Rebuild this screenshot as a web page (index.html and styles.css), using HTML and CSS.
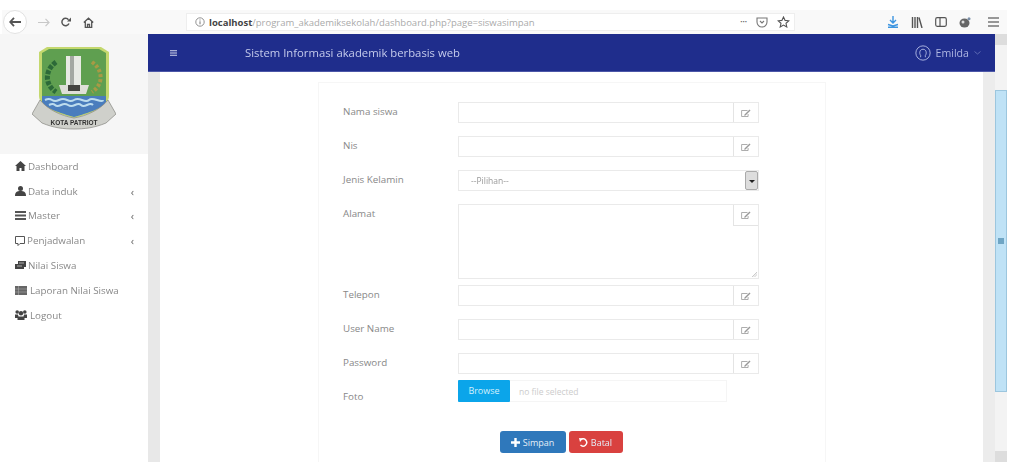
FILE: index.html
```html
<!DOCTYPE html>
<html lang="id">
<head>
    <meta charset="UTF-8">
    <title>Sistem Informasi Akademik</title>
    <link rel="stylesheet" href="styles.css">
</head>
<body>
<div class="page">
    <div class="toolbar">
        <div class="nav-icons">
            <span class="back-btn">
                <svg width="12" height="10" viewBox="0 0 12 10"><path d="M5 .8L1.200 5 5 9.200M1.800 5H12" fill="none" stroke="#555" stroke-width="1.800"/></svg>
            </span>
            <svg class="fwd" width="12" height="9" viewBox="0 0 12 9"><path d="M7.500.8l3.500 3.700-3.500 3.700M0 4.500h10" fill="none" stroke="#c8c8c8" stroke-width="1.200"/></svg>
            <svg class="reload" width="11" height="10" viewBox="0 0 11 10"><path d="M9 6.500A3.700 3.700 0 1 1 8.500 2.700" fill="none" stroke="#555" stroke-width="1.500"/><path d="M11 .5v4H7z" fill="#555"/></svg>
            <svg class="home" width="11" height="11" viewBox="0 0 11 11"><path d="M.8 5.500L5.500 1.200l4.700 4.300M2.300 4.700v5.600h6.400V4.700M4.500 10.300V7.500h2v2.800" fill="none" stroke="#555" stroke-width="1.300"/></svg>
        </div>
        <div class="urlbar">
            <svg class="info" width="10" height="10" viewBox="0 0 10 10"><circle cx="5" cy="5" r="4.200" fill="none" stroke="#777" stroke-width=".8"/><path d="M5 4.300v3M5 2.500v1" stroke="#777"/></svg>
            <span class="url"><b>localhost</b>/program_akademiksekolah/dashboard.php?page=siswasimpan</span>
            <span class="url-actions">
                <span class="dots">•••</span>
                <svg width="12" height="11" viewBox="0 0 12 11"><path d="M1 1h10v4a5 5 0 0 1-10 0zM4 4l2 2 2-2" fill="none" stroke="#777" stroke-width="1.100"/></svg>
                <svg width="13" height="12" viewBox="0 0 13 12"><path d="M6.500 1l1.600 3.400 3.700.4-2.800 2.500.8 3.700-3.300-1.900-3.300 1.900.8-3.700L1.200 4.800l3.700-.4z" fill="none" stroke="#555" stroke-width="1.100"/></svg>
            </span>
        </div>
        <div class="tool-icons">
            <svg width="12" height="12" viewBox="0 0 12 12"><path d="M6 0v7M3 4l3 3 3-3M1 8.500l5 1.500 5-1.500M1 11.300h10" fill="none" stroke="#3d95e0" stroke-width="1.400"/></svg>
            <svg width="12" height="11" viewBox="0 0 12 11"><path d="M1.500 0v11M4 0v11M6.500 0v11M8 .5l3 10.500" fill="none" stroke="#555" stroke-width="1.400"/></svg>
            <svg width="12" height="10" viewBox="0 0 12 10"><rect x=".7" y=".7" width="10.600" height="8.600" rx="1.500" fill="none" stroke="#555" stroke-width="1.200"/><path d="M5 1v8" stroke="#555" stroke-width="1.200"/></svg>
            <svg width="12" height="11" viewBox="0 0 12 11"><ellipse cx="5.500" cy="6" rx="5" ry="4.500" fill="#666"/><circle cx="4" cy="5" r="1.500" fill="#ddd"/><circle cx="10" cy="1.800" r="1.500" fill="#7a8fa8"/></svg>
            <svg class="burger" width="11" height="10" viewBox="0 0 11 10"><path d="M0 1h11M0 5h11M0 9h11" stroke="#777" stroke-width="1.300"/></svg>
        </div>
    </div>

    <div class="frame">
        <aside class="sidebar">
            <div class="logo-box">
                <svg width="84" height="84" viewBox="0 0 84 84">
                    <path d="M7 6L15 1H69L77 6V50C77 60 60 68 42 72C24 68 7 60 7 50Z" fill="#c4d86e"/>
                    <path d="M10 7L17 3H67L74 7V50H10Z" fill="#5f9f50"/>
                    <path d="M24 16C13 24 12 38 24 46" fill="none" stroke="#2c6a38" stroke-width="5" stroke-dasharray="4 1.500"/>
                    <path d="M60 16C71 24 72 38 60 46" fill="none" stroke="#a89a45" stroke-width="4" stroke-dasharray="3 2"/>
                    <path d="M34 10H49V40H34Z" fill="#e8eae4"/>
                    <path d="M38 10H42V40H38Z" fill="#a4a8a2"/>
                    <path d="M27 39H57L54 48H30Z" fill="#dedfd8"/>
                    <path d="M36 39H48V45H36Z" fill="#44443f"/>
                    <path d="M10 50H74V56C72 62 56 67 42 71C28 67 12 62 10 56Z" fill="#4a7dbd"/>
                    <path d="M13 54q4-2 7 0t7 0 8 0 7 0 8 0 7 0 8 0 6 0M17 59q4-2 6 0t6 0 7 0 7 0 6 0 6 0 6 0" fill="none" stroke="#bcdcee" stroke-width="2"/>
                    <path d="M0 68L8 54C16 64 30 70 42 72C54 70 68 64 76 54L84 68L74 77C62 82 52 83 42 83C32 83 22 82 10 77Z" fill="#cfd0cb" stroke="#85857f" stroke-width=".7"/>
                    <text class="crest-text" x="42" y="79" text-anchor="middle">KOTA PATRIOT</text>
                </svg>
            </div>
            <ul class="menu">
                <li><svg class="mi" width="11" height="10" viewBox="0 0 11 10"><path d="M5.500 0L11 5H9.500V10H6.500V7H4.500V10H1.500V5H0Z" fill="#444"/></svg>Dashboard</li>
                <li><svg class="mi" width="11" height="10" viewBox="0 0 11 10"><circle cx="5.500" cy="2.500" r="2.500" fill="#444"/><path d="M0 10C0 6 2 5 5.500 5S11 6 11 10Z" fill="#444"/></svg>Data induk<span class="caret">‹</span></li>
                <li><svg class="mi" width="11" height="9" viewBox="0 0 11 9"><path d="M0 0h11v2H0zM0 3.500h11v2H0zM0 7h11v2H0z" fill="#555"/></svg>Master<span class="caret">‹</span></li>
                <li><svg class="mi" width="10" height="10" viewBox="0 0 10 10"><path d="M.5.500h9v7H5L3 9.500V7.500H.5z" fill="none" stroke="#555"/></svg>Penjadwalan<span class="caret">‹</span></li>
                <li><svg class="mi" width="11" height="9" viewBox="0 0 11 9"><path d="M3 0h8v6H9v2H0V3h3z" fill="#444"/><path d="M4 2h5M2 5h5" stroke="#ddd" stroke-width=".7"/></svg>Nilai Siswa</li>
                <li class="wide"><svg class="mi" width="12" height="9" viewBox="0 0 12 9"><path d="M0 0h12v9H0z" fill="#666"/><path d="M0 3h12M0 6h12M3.500 0v9" stroke="#aaa" stroke-width=".6"/></svg>Laporan Nilai Siswa</li>
                <li class="wide"><svg class="mi" width="12" height="10" viewBox="0 0 12 10"><circle cx="2.200" cy="2" r="1.800" fill="#444"/><circle cx="9.800" cy="2" r="1.800" fill="#444"/><circle cx="6" cy="3.200" r="2.200" fill="#444"/><path d="M0 4.500h3l.5 2h5l.5-2h3V8H9.500V10h-7V8H0Z" fill="#444"/></svg>Logout</li>
            </ul>
        </aside>

        <div class="main">
            <header class="topbar">
                <svg class="hamb" width="7" height="6" viewBox="0 0 7 6"><path d="M0 .7h7M0 3h7M0 5.300h7" stroke="#d5d8ec" stroke-width="1.100"/></svg>
                <span class="app-title">Sistem Informasi akademik berbasis web</span>
                <span class="user">
                    <svg width="16" height="16" viewBox="0 0 17 17"><circle cx="8.500" cy="8.500" r="7.600" fill="none" stroke="#aeb6e2"/><path d="M6 13V11C4.500 9.500 4.500 4.500 8.500 4.500S12.500 9.500 11 11V13" fill="none" stroke="#aeb6e2"/></svg>
                    Emilda
                    <svg class="chev" width="7" height="4" viewBox="0 0 7 4"><path d="M.5.500l3 2.500 3-2.500" fill="none" stroke="#6f79bd" stroke-width=".8"/></svg>
                </span>
            </header>
            <div class="content">
                <form class="card">
                    <div class="row">
                        <label>Nama siswa</label>
                        <div class="group">
                            <input type="text">
                            <span class="addon"><svg class="edit" width="10" height="8" viewBox="0 0 10 8"><use href="#pencil"/></svg></span>
                        </div>
                    </div>
                    <div class="row">
                        <label>Nis</label>
                        <div class="group">
                            <input type="text">
                            <span class="addon"><svg class="edit" width="10" height="8" viewBox="0 0 10 8"><use href="#pencil"/></svg></span>
                        </div>
                    </div>
                    <div class="row">
                        <label>Jenis Kelamin</label>
                        <div class="group select">
                            <span class="select-text">--Pilihan--</span>
                            <span class="select-arrow"></span>
                        </div>
                    </div>
                    <div class="row row-area">
                        <label>Alamat</label>
                        <div class="group area">
                            <span class="addon"><svg class="edit" width="10" height="8" viewBox="0 0 10 8"><use href="#pencil"/></svg></span>
                        </div>
                    </div>
                    <div class="row">
                        <label>Telepon</label>
                        <div class="group">
                            <input type="text">
                            <span class="addon"><svg class="edit" width="10" height="8" viewBox="0 0 10 8"><use href="#pencil"/></svg></span>
                        </div>
                    </div>
                    <div class="row">
                        <label>User Name</label>
                        <div class="group">
                            <input type="text">
                            <span class="addon"><svg class="edit" width="10" height="8" viewBox="0 0 10 8"><use href="#pencil"/></svg></span>
                        </div>
                    </div>
                    <div class="row">
                        <label>Password</label>
                        <div class="group">
                            <input type="text">
                            <span class="addon"><svg class="edit" width="10" height="8" viewBox="0 0 10 8"><use href="#pencil"/></svg></span>
                        </div>
                    </div>
                    <div class="row row-file">
                        <label>Foto</label>
                        <div class="file-group">
                            <span class="browse">Browse</span>
                            <span class="file-name">no file selected</span>
                        </div>
                    </div>
                    <div class="actions">
                        <span class="btn btn-blue"><svg width="9" height="9" viewBox="0 0 9 9"><path d="M4.500 0v9M0 4.500h9" stroke="#fff" stroke-width="2.400"/></svg>Simpan</span>
                        <span class="btn btn-red"><svg width="9" height="9" viewBox="0 0 9 9"><path d="M2 1.500A3.600 3.600 0 1 1 1.500 7" fill="none" stroke="#fff" stroke-width="1.400"/><path d="M0 0l4 .5L1 4z" fill="#fff"/></svg>Batal</span>
                    </div>
                </form>
            </div>
        </div>

        <div class="scrollbar">
            <span class="sb-btn"></span>
            <div class="sb-track"><div class="sb-thumb"><span class="grip"></span></div></div>
            <span class="sb-btn"></span>
        </div>
    </div>
</div>

<svg class="defs" width="0" height="0">
    <symbol id="pencil" viewBox="0 0 10 8"><path d="M6.500 1.500H.6v6h6.500V5" fill="none" stroke="#999" stroke-width=".8"/><path d="M3.500 5.500L8.500.5l1 1-5 5-1.300.2z" fill="#999"/></symbol>
</svg>
</body>
</html>
```
FILE: styles.css
```css
* {
    box-sizing: border-box;
}
html, body {
    margin: 0;
    height: 100%;
    background: #fff;
    overflow: hidden;
}
body {
    font-family: "Open Sans", "Liberation Sans", sans-serif;
    color: #777;
    font-size: 9.8px;
}
.page {
    height: 468px;
    padding-top: 10px;
    filter: blur(0.7px);
}
.defs {
    position: absolute;
}

/* browser bar */
.toolbar {
    display: flex;
    align-items: center;
    width: 1005px;
    height: 24px;
    margin-left: 2px;
    background: #f9f9f9;
}
.nav-icons {
    display: flex;
    align-items: center;
    width: 184px;
}
.back-btn {
    display: flex;
    align-items: center;
    justify-content: center;
    width: 24px;
    height: 24px;
    margin-left: 1px;
    border: 1px solid #e2e2e2;
    border-radius: 50%;
    background: #fff;
}
.fwd {
    margin-left: 11px;
}
.reload {
    margin-left: 10px;
}
.home {
    margin-left: 12px;
}
.urlbar {
    display: flex;
    align-items: center;
    width: 609px;
    height: 18px;
    padding: 0 4px 0 8px;
    background: #fff;
    border: 1px solid #eee;
}
.url {
    margin-left: 4px;
    font-size: 9.5px;
    color: #aaa;
}
.url b {
    color: #444;
}
.url-actions {
    display: flex;
    align-items: center;
    gap: 9px;
    margin-left: auto;
}
.dots {
    font-size: 6px;
    color: #666;
}
.tool-icons {
    display: flex;
    align-items: center;
    gap: 12px;
    margin-left: 92px;
}
.burger {
    margin-left: 5px;
}

/* page frame */
.frame {
    display: flex;
    height: 428px;
}
.sidebar {
    width: 148px;
    flex: none;
}
.logo-box {
    display: flex;
    justify-content: center;
    height: 120px;
    padding-top: 12px;
    background: #f6f6f6;
}
.crest-text {
    font-family: "Liberation Sans", sans-serif;
    font-size: 6.5px;
    font-weight: bold;
    fill: #333;
}
.menu {
    list-style: none;
    margin: 0;
    padding: 0 0 0 15px;
}
.menu li {
    display: flex;
    align-items: center;
    height: 24.8px;
    padding-right: 14px;
    font-size: 9.8px;
    color: #888;
}
.mi {
    margin-right: 2px;
    flex: none;
}
.menu .wide .mi {
    margin-right: 3px;
}
.caret {
    margin-left: auto;
    font-size: 11px;
    color: #666;
}

.main {
    width: 847px;
    flex: none;
    display: flex;
    flex-direction: column;
}
.topbar {
    display: flex;
    align-items: center;
    height: 38px;
    padding: 0 14px 0 22px;
    background: #1f2d8c;
    color: #c5cbec;
    border-bottom: 1px solid #4c57a8;
}
.app-title {
    margin-left: 68px;
    font-size: 11.3px;
}
.user {
    display: flex;
    align-items: center;
    gap: 5px;
    margin-left: auto;
    font-size: 10.6px;
    color: #aeb6e2;
}
.content {
    flex: 1;
    padding: 10px 0 0 158px;
    background: #fff;
    border-left: 12px solid #e8e8e8;
    border-right: 12px solid #ececec;
}
.card {
    width: 508px;
    height: 380px;
    padding: 19px 24px 0;
    border: 1px solid #f6f6f6;
    border-bottom: 0;
}

/* form rows */
.row {
    display: flex;
    height: 21px;
    margin-bottom: 13px;
}
.row label {
    width: 115px;
    flex: none;
    font-size: 9.8px;
    line-height: 20px;
    color: #888;
}
.group {
    display: flex;
    width: 301px;
    height: 21px;
    border: 1px solid #eaeaea;
}
.group input {
    flex: 1;
    min-width: 0;
    border: 0;
    background: #fff;
}
.addon {
    display: flex;
    align-items: center;
    justify-content: center;
    width: 25px;
    height: 100%;
    flex: none;
    border-left: 1px solid #e4e4e4;
}
.select {
    align-items: center;
    padding-left: 12px;
    position: relative;
}
.select-text {
    font-size: 8.5px;
    color: #999;
}
.select-arrow {
    position: absolute;
    top: 0;
    right: 0;
    width: 13px;
    height: 100%;
    background: #ddd;
    border: 1px solid #aaa;
    border-radius: 2px;
}
.select-arrow::after {
    content: "";
    position: absolute;
    top: 8px;
    left: 3px;
    border: 3px solid transparent;
    border-top-color: #222;
}
.row-area {
    height: 75px;
    margin-bottom: 6px;
}
.group.area {
    height: 75px;
    justify-content: flex-end;
    align-items: flex-start;
    position: relative;
}
.area .addon {
    height: 21px;
    border-bottom: 1px solid #e4e4e4;
}
.area::after {
    content: "";
    position: absolute;
    right: 1px;
    bottom: 1px;
    width: 5px;
    height: 5px;
    background: linear-gradient(135deg, transparent 50%, #ccc 50%, transparent 65%, #ccc 75%, transparent 85%);
}
.row-file {
    height: 22px;
    margin: -7px 0 29px;
}
.row-file label {
    padding-top: 7px;
}
.file-group {
    display: flex;
    width: 269px;
    height: 22px;
    border: 1px solid #f5f5f5;
    border-left: 0;
}
.browse {
    width: 52px;
    margin: -1px 0;
    height: 22px;
    line-height: 22px;
    text-align: center;
    font-size: 9px;
    color: #d5f0fc;
    background: #0ba5ea;
    border-radius: 1px;
}
.file-name {
    margin-left: 9px;
    line-height: 21px;
    font-size: 8.5px;
    color: #ccc;
}
.actions {
    display: flex;
    justify-content: center;
    gap: 3px;
    padding-right: 20px;
    margin-left: -2px;
}
.btn {
    display: flex;
    align-items: center;
    justify-content: center;
    gap: 3px;
    height: 22px;
    font-size: 9px;
    color: #e4eef8;
    border-radius: 3px;
}
.btn-blue {
    width: 66px;
    background: #2f78bb;
}
.btn-red {
    width: 54px;
    background: #d9413f;
}

/* scrollbar */
.scrollbar {
    display: flex;
    flex-direction: column;
    width: 12px;
    background: #f3f3f3;
}
.sb-btn {
    height: 11px;
    background: #ddd;
}
.sb-track {
    flex: 1;
    padding-top: 45px;
}
.sb-thumb {
    display: flex;
    align-items: center;
    justify-content: center;
    height: 302px;
    background: #bfe2f6;
    border: 1px solid #9cc6de;
}
.grip {
    width: 6px;
    height: 6px;
    background: #6fa5c4;
}
```
